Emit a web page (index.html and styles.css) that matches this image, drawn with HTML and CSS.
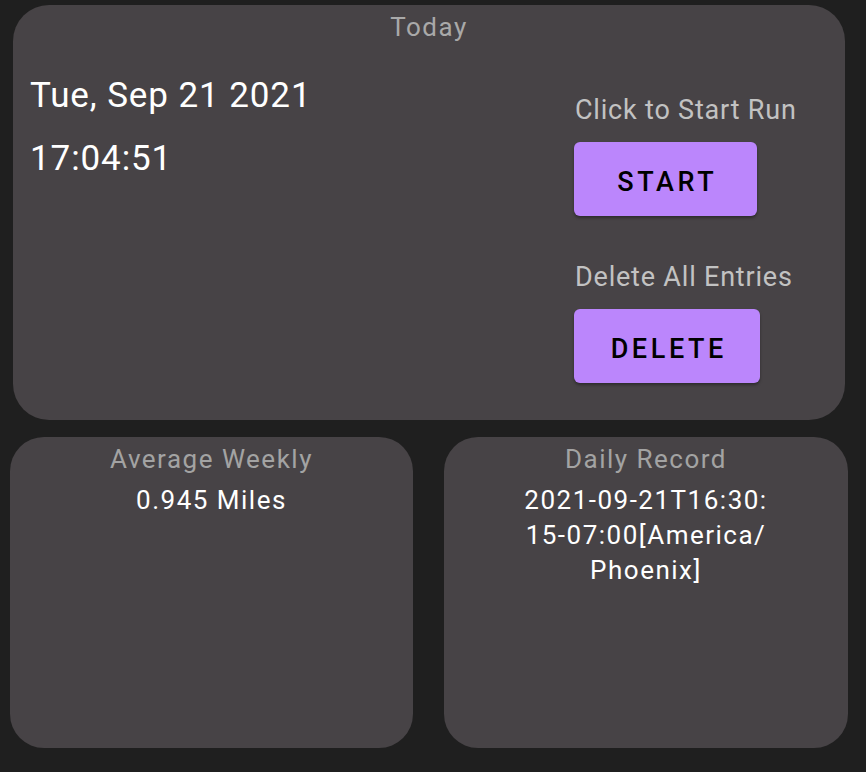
FILE: index.html
```html
<!DOCTYPE html>
<html lang="en">
<head>
<meta charset="utf-8">
<title>Run Tracker</title>
<link rel="stylesheet" href="styles.css">
</head>
<body>
<main class="screen">
  <section class="card card-today">
    <h2 class="card-title">Today</h2>
    <div class="today-body">
      <div class="clock">
        <p class="clock-date">Tue, Sep 21 2021</p>
        <p class="clock-time">17:04:51</p>
      </div>
      <div class="actions">
        <p class="action-label">Click to Start Run</p>
        <button class="btn btn-start" type="button">START</button>
        <p class="action-label action-label-delete">Delete All Entries</p>
        <button class="btn btn-delete" type="button">DELETE</button>
      </div>
    </div>
  </section>
  <div class="stats">
    <section class="card card-stat card-weekly">
      <h2 class="card-title stat-title">Average Weekly</h2>
      <p class="stat-value">0.945 Miles</p>
    </section>
    <section class="card card-stat card-record">
      <h2 class="card-title stat-title">Daily Record</h2>
      <p class="stat-value">2021-09-21T16:30:<br>15-07:00[America/<br>Phoenix]</p>
    </section>
  </div>
</main>
</body>
</html>
```

FILE: styles.css
```css
* { box-sizing: border-box; }
html, body {
  margin: 0;
  padding: 0;
  background: #1f1f1f;
  font-family: Roboto, "Noto Sans", "Liberation Sans", sans-serif;
}
p, h2 { margin: 0; }

.screen {
  width: 866px;
  height: 772px;
  padding-top: 5px;
}

.card {
  background: #474346;
}

.card-today {
  margin-left: 13px;
  width: 832px;
  height: 415px;
  border-radius: 36px;
  padding-top: 8px;
}

.card-title {
  font-size: 26px;
  font-weight: 400;
  line-height: 28px;
  letter-spacing: 1.5px;
  color: #a9a9a9;
  text-align: center;
}

.today-body {
  display: flex;
  justify-content: space-between;
}

.clock {
  padding-left: 17px;
  padding-top: 35px;
  color: #ffffff;
  font-size: 35px;
  line-height: 40px;
  letter-spacing: 0.9px;
}
.clock-time {
  margin-top: 23px;
}

.actions {
  width: 271px;
  padding-top: 54px;
  display: flex;
  flex-direction: column;
  align-items: flex-start;
}
.action-label {
  font-size: 27px;
  line-height: 30px;
  letter-spacing: 0.8px;
  color: #c2c2c2;
  margin-left: 1px;
}
.action-label-delete {
  margin-top: 46px;
}

.btn {
  height: 74px;
  border: 0;
  border-radius: 6px;
  background: #bb86fc;
  color: #000000;
  font-family: Roboto, "Noto Sans", "Liberation Sans", sans-serif;
  font-size: 27px;
  font-weight: 500;
  letter-spacing: 3.6px;
  padding: 5px 0 0 3.6px;
  box-shadow: 0 2px 3px rgba(0, 0, 0, 0.35);
}
.btn-start { width: 183px; margin-top: 17px; }
.btn-delete { width: 186px; margin-top: 17px; }

.stats {
  margin-top: 17px;
  padding-left: 10px;
  display: flex;
  gap: 31px;
}
.card-stat {
  height: 311px;
  border-radius: 34px;
  padding-top: 8px;
  text-align: center;
}
.card-weekly { width: 403px; }
.card-record { width: 404px; }

.stat-title { color: #a3a3a3; }

.stat-value {
  margin-top: 10px;
  font-size: 26px;
  line-height: 35px;
  letter-spacing: 1.5px;
  color: #ffffff;
}
```
